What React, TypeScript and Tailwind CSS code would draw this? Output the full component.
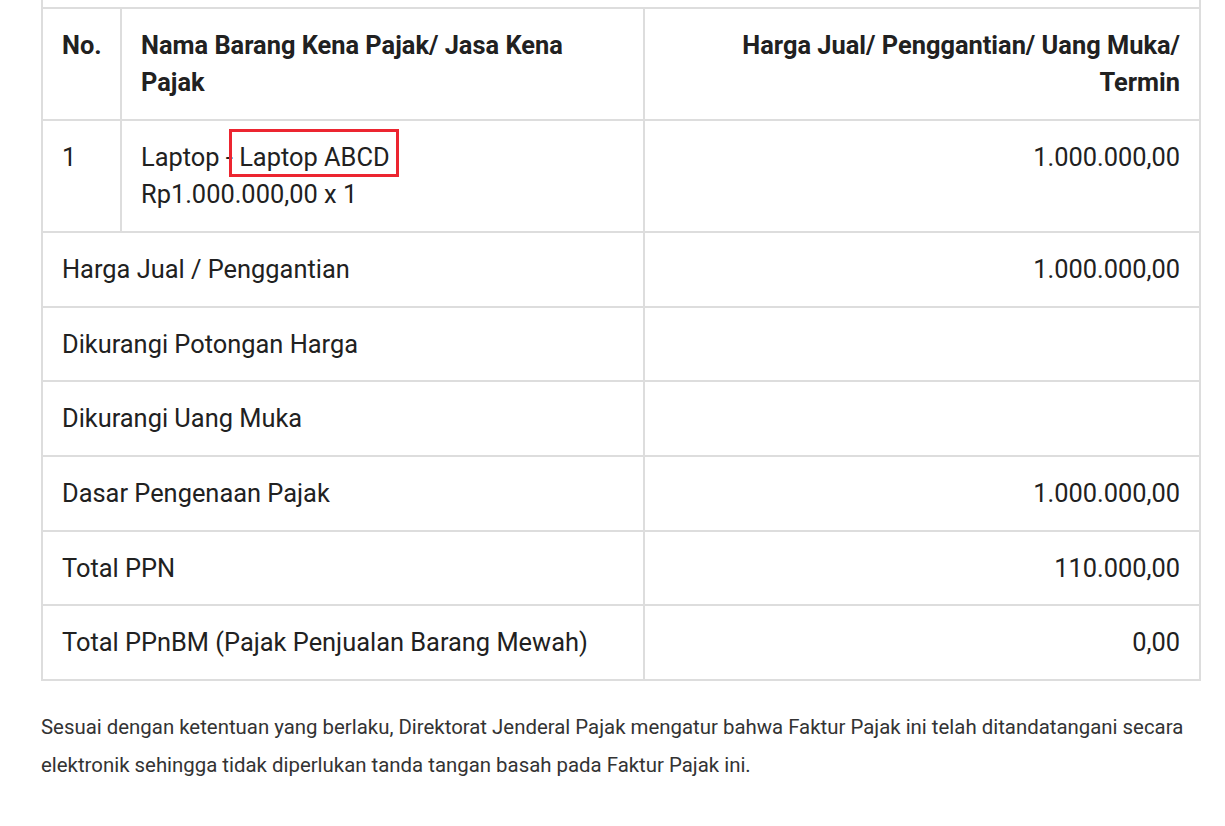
import React from 'react';

const rows = [
  { label: 'Harga Jual / Penggantian', value: '1.000.000,00' },
  { label: 'Dikurangi Potongan Harga', value: '' },
  { label: 'Dikurangi Uang Muka', value: '' },
  { label: 'Dasar Pengenaan Pajak', value: '1.000.000,00' },
  { label: 'Total PPN', value: '110.000,00' },
  { label: 'Total PPnBM (Pajak Penjualan Barang Mewah)', value: '0,00' },
];

export default function App() {
  const cell = 'border-2 border-[#dddddd] px-[19px] py-[18px] align-top';

  return (
    <div className="min-h-screen bg-white font-['Roboto',sans-serif] text-[#212121]">
      <div className="ml-[41px] w-[1160px]">
        <table className="w-full table-fixed border-collapse text-[25.4px] leading-[37px]">
          <colgroup>
            <col className="w-[79px]" />
            <col className="w-[523px]" />
            <col />
          </colgroup>
          <tbody>
            {/* tail of the previous section, scrolled off */}
            <tr>
              <td colSpan={3} className="h-[8px] border-2 border-t-0 border-[#dddddd] p-0" />
            </tr>

            {/* Header */}
            <tr className="font-bold">
              <td className={cell}>No.</td>
              <td className={cell}>Nama Barang Kena Pajak/ Jasa Kena Pajak</td>
              <td className={`${cell} text-right`}>Harga Jual/ Penggantian/ Uang Muka/ Termin</td>
            </tr>

            {/* Item */}
            <tr>
              <td className={cell}>1</td>
              <td className={cell}>
                Laptop -{' '}
                <span className="relative inline-block">
                  Laptop ABCD
                  <span className="absolute -left-[10px] -right-[9px] -top-[10px] -bottom-[1px] border-[3px] border-[#ec2530]" />
                </span>
                <br />
                Rp1.000.000,00 x 1
              </td>
              <td className={`${cell} text-right`}>1.000.000,00</td>
            </tr>

            {/* Totals */}
            {rows.map((r) => (
              <tr key={r.label} className="leading-[36.67px]">
                <td colSpan={2} className={cell}>
                  {r.label}
                </td>
                <td className={`${cell} text-right`}>{r.value}</td>
              </tr>
            ))}
          </tbody>
        </table>

        <p className="mt-[27px] text-[20.4px] leading-[38px] text-[#333333]">
          Sesuai dengan ketentuan yang berlaku, Direktorat Jenderal Pajak mengatur bahwa Faktur Pajak ini telah
          ditandatangani secara elektronik sehingga tidak diperlukan tanda tangan basah pada Faktur Pajak ini.
        </p>
      </div>
    </div>
  );
}
